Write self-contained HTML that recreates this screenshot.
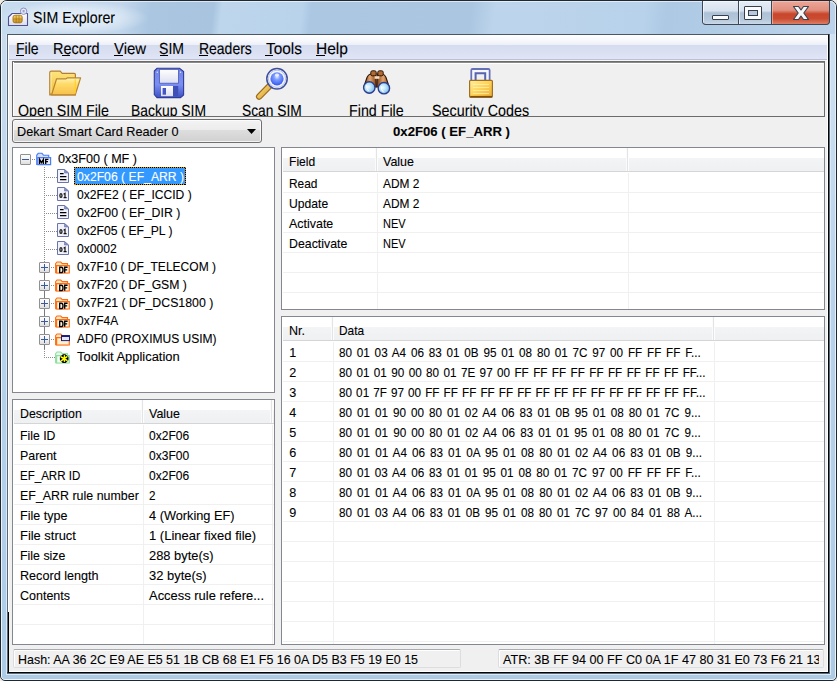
<!DOCTYPE html>
<html><head><meta charset="utf-8"><title>SIM Explorer</title>
<style>
*{box-sizing:border-box}
html,body{margin:0;padding:0;width:837px;height:681px;overflow:hidden;background:#f1ece2}
body{font-family:"Liberation Sans",sans-serif;position:relative;color:#000}
.a{position:absolute}
.t{position:absolute;white-space:pre;line-height:1;transform-origin:0 0;-webkit-text-stroke:0.1px currentColor}
</style></head><body>

<div class="a" style="left:0;top:0;width:837px;height:681px;border:1px solid #1d2833;border-radius:7px 7px 5px 5px;overflow:hidden;
 background:linear-gradient(100deg,#cddff0 0%,#bcd3ea 8%,#c4d9ee 14%,#b0cae4 22%,#bed4eb 30%,#abc7e2 38%,#b9d1e9 46%,#aac6e1 56%,#bad2ea 64%,#a9c5e1 72%,#bcd3eb 80%,#a8c5e2 90%,#c0d6ec 100%)"></div>
<div class="a" style="left:1px;top:1px;width:835px;height:679px;border:1px solid rgba(255,255,255,.7);border-radius:6px 6px 4px 4px"></div>
<div class="a" style="left:2px;top:34px;width:5px;height:639px;background:linear-gradient(#cadcee 0px,#b8d3eb 266px,#b0cde8 566px,#aecbe6 639px)"></div>
<div class="a" style="left:830px;top:34px;width:5px;height:639px;background:linear-gradient(#d0e2f2 0px,#b8d3eb 266px,#b0cde8 566px,#aecbe6 639px)"></div>
<div class="a" style="left:2px;top:673px;width:833px;height:6px;background:#aecbe6;border-radius:0 0 3px 3px"></div>
<div class="a" style="left:6px;top:33px;width:825px;height:642px;border:1px solid rgba(220,235,250,.95)"></div>
<div class="a" style="left:7px;top:34px;width:823px;height:640px;border:1px solid #5a6876;border-top-color:#4a5764"></div>
<div class="a" style="left:7px;top:34px;width:822px;height:639px;border:1px solid transparent;border-bottom-color:#050505;border-right-color:#050505;background:#f0f0f0;background-clip:padding-box"></div>
<div class="a" style="left:1px;top:1px;width:835px;height:33px;border-radius:6px 6px 0 0;background:linear-gradient(97deg,#c8dcef 0px,#c2d7ec 120px,#aac6e1 150px,#a8c4df 212px,#bdd6ec 220px,#b9d3eb 300px,#abc7e2 309px,#aac6e1 468px,#bdd5ec 492px,#b8d2eb 640px,#adc9e3 662px,#b0cbe5 700px,#bcd3ea 835px)"></div><div class="a" style="left:1px;top:1px;width:835px;height:33px;border:1px solid rgba(255,255,255,.6);border-bottom:none;border-radius:6px 6px 0 0"></div><div class="a" style="left:2px;top:2px;width:150px;height:31px;background:radial-gradient(ellipse 75px 17px at 72px 16px,rgba(240,246,252,.75) 0%,rgba(240,246,252,.55) 55%,rgba(240,246,252,0) 100%)"></div><svg class="a" style="left:7px;top:6px" width="22" height="22" viewBox="0 0 22 22">
 <defs><linearGradient id="tc" x1="0" y1="0" x2="0" y2="1"><stop offset="0" stop-color="#ffffff"/><stop offset="1" stop-color="#dcdde8"/></linearGradient>
 <linearGradient id="tg" x1="0" y1="0" x2="0" y2="1"><stop offset="0" stop-color="#f7d468"/><stop offset="1" stop-color="#c98e1c"/></linearGradient></defs>
 <path d="M1.5 11 L5.2 7.5 H20.5 V19.5 H1.5 Z" fill="url(#tc)" stroke="#4d5199" stroke-width="1.1" stroke-linejoin="round"/>
 <rect x="6" y="9.2" width="9.2" height="7.6" rx="2" fill="url(#tg)" stroke="#9a6a12" stroke-width=".8"/>
 <path d="M9.2 9.5 V16.5 M12 9.5 V16.5 M6.3 13 H15" stroke="#9a6a12" stroke-width=".6"/>
 <circle cx="16.6" cy="5.2" r="3.2" fill="#e6e9f5" stroke="#8a93c4" stroke-width="1"/>
 <rect x="15.6" y="4" width="2" height="2.4" fill="#9aa2cf"/>
</svg><div class="t" style="left:33.20px;top:11.00px;font-size:16px;color:#000;transform:scaleX(0.8868);text-rendering:geometricPrecision">SIM Explorer</div>
<div class="a" style="left:702px;top:1px;width:128px;height:24px;border:1px solid #3c4857;border-top:none;border-radius:0 0 4px 4px;overflow:hidden;background:#3c4857">
 <div class="a" style="left:0;top:0;width:35px;height:23px;background:linear-gradient(#e6edf5 0%,#d8e3ef 42%,#adc0d5 52%,#b5c7da 80%,#cad8e7 100%);box-shadow:inset 1px 1px 0 rgba(255,255,255,.6)"></div>
 <div class="a" style="left:36px;top:0;width:32px;height:23px;background:linear-gradient(#e6edf5 0%,#d8e3ef 42%,#adc0d5 52%,#b5c7da 80%,#cad8e7 100%);box-shadow:inset 1px 1px 0 rgba(255,255,255,.6)"></div>
 <div class="a" style="left:69px;top:0;width:58px;height:23px;background:linear-gradient(#eda798 0%,#e08f7e 40%,#c9472c 56%,#c94b30 76%,#df7d66 100%);box-shadow:inset 1px 1px 0 rgba(255,200,190,.6)"></div>
</div>
<div class="a" style="left:712px;top:15px;width:17px;height:5px;background:#fbfbfb;border:1px solid #353f4e;border-radius:1px"></div>
<div class="a" style="left:744px;top:6px;width:18px;height:14px;border:1px solid #353f4e;border-radius:1px;background:#fbfbfb"></div>
<div class="a" style="left:748px;top:10px;width:10px;height:6px;border:1px solid #353f4e;background:#b9c9db"></div>
<svg class="a" style="left:791px;top:5px" width="20" height="16" viewBox="0 0 20 16">
 <path d="M2.5 1.5 L7.5 1.5 L10 5 L12.5 1.5 L17.5 1.5 L12.8 8 L17.5 14.5 L12.5 14.5 L10 11 L7.5 14.5 L2.5 14.5 L7.2 8 Z" fill="#f6f6f6" stroke="#3a4150" stroke-width="1.1" stroke-linejoin="round"/>
</svg>
<div class="a" style="left:8px;top:35px;width:820px;height:25px;background:linear-gradient(#ffffff 0px,#f8f9fc 5px,#eceff8 10px,#d5dcef 10px,#dae0f2 17px,#e0e6f5 24px,#b9c0d7 24px)"></div>
<div class="a" style="left:8px;top:60px;width:820px;height:1px;background:#f7f7f7"></div><div class="t" style="left:16.10px;top:42.00px;font-size:16px;color:#000;transform:scaleX(0.8766);text-rendering:geometricPrecision">File</div><div class="a" style="left:16px;top:55px;width:8px;height:1px;background:#000"></div><div class="t" style="left:53.10px;top:42.00px;font-size:16px;color:#000;transform:scaleX(0.9015);text-rendering:geometricPrecision">Record</div><div class="a" style="left:62px;top:55px;width:8px;height:1px;background:#000"></div><div class="t" style="left:114.00px;top:42.00px;font-size:16px;color:#000;transform:scaleX(0.9334);text-rendering:geometricPrecision">View</div><div class="a" style="left:114px;top:55px;width:9px;height:1px;background:#000"></div><div class="t" style="left:159.40px;top:42.00px;font-size:16px;color:#000;transform:scaleX(0.8786);text-rendering:geometricPrecision">SIM</div><div class="a" style="left:160px;top:55px;width:8px;height:1px;background:#000"></div><div class="t" style="left:198.80px;top:42.00px;font-size:16px;color:#000;transform:scaleX(0.8730);text-rendering:geometricPrecision">Readers</div><div class="a" style="left:199px;top:55px;width:9px;height:1px;background:#000"></div><div class="t" style="left:265.90px;top:42.00px;font-size:16px;color:#000;transform:scaleX(0.9609);text-rendering:geometricPrecision">Tools</div><div class="a" style="left:265px;top:55px;width:8px;height:1px;background:#000"></div><div class="t" style="left:315.60px;top:42.00px;font-size:16px;color:#000;transform:scaleX(0.9694);text-rendering:geometricPrecision">Help</div><div class="a" style="left:316px;top:55px;width:9px;height:1px;background:#000"></div><div class="a" style="left:12px;top:61px;width:813px;height:56px;border:1px solid #6b6b6b;background:#f0f0f0"></div>
<div class="a" style="left:13px;top:62px;width:811px;height:1px;background:#8a8a8a"></div>
<div class="a" style="left:13px;top:63px;width:810px;height:1px;background:#fff"></div>
<div class="a" style="left:13px;top:62px;width:1px;height:54px;background:#fff"></div><div class="a" style="left:13px;top:63px;width:811px;height:53px;overflow:hidden"><div class="t" style="left:5.20px;top:41.00px;font-size:16px;color:#000;transform:scaleX(0.8889);text-rendering:geometricPrecision">Open SIM File</div><div class="t" style="left:117.70px;top:41.00px;font-size:16px;color:#000;transform:scaleX(0.8694);text-rendering:geometricPrecision">Backup SIM</div><div class="t" style="left:228.70px;top:41.00px;font-size:16px;color:#000;transform:scaleX(0.8622);text-rendering:geometricPrecision">Scan SIM</div><div class="t" style="left:335.90px;top:41.00px;font-size:16px;color:#000;transform:scaleX(0.8915);text-rendering:geometricPrecision">Find File</div><div class="t" style="left:418.90px;top:41.00px;font-size:16px;color:#000;transform:scaleX(0.8949);text-rendering:geometricPrecision">Security Codes</div></div><svg class="a" style="left:44px;top:64px;overflow:visible" width="44" height="36" viewBox="0 0 44 36">
<defs>
 <linearGradient id="fb" x1="0" y1="0" x2="0" y2="1"><stop offset="0" stop-color="#fde57e"/><stop offset="1" stop-color="#f0bd3c"/></linearGradient>
 <linearGradient id="ff" x1="0" y1="0" x2="0" y2="1"><stop offset="0" stop-color="#fff4b8"/><stop offset=".35" stop-color="#ffdb6a"/><stop offset="1" stop-color="#f7c04a"/></linearGradient>
</defs>
<path d="M5.8 30.8 V8.6 Q5.8 7.2 7.2 7.2 H16.2 L18.2 9.4 H30.2 Q31.4 9.4 31.4 10.6 V30.8 Z" fill="url(#fb)" stroke="#b47e30" stroke-width="1.2"/>
<path d="M7 8.6 V29" stroke="#fff7c0" stroke-width="1" opacity=".8"/>
<path d="M12.6 14.8 H22 L23.2 13.9 H36.6 L31.3 30.8 H7.6 Z" fill="url(#ff)" stroke="#b98630" stroke-width="1.2" stroke-linejoin="round"/>
<path d="M31.3 15.2 V29.5" stroke="#ffd21a" stroke-width="1.2" opacity=".85"/>
</svg><svg class="a" style="left:148px;top:64px;overflow:visible" width="44" height="36" viewBox="0 0 44 36">
<defs>
 <linearGradient id="flb" x1="0" y1="0" x2="0" y2="1"><stop offset="0" stop-color="#6f84e6"/><stop offset=".55" stop-color="#7b8ff2"/><stop offset="1" stop-color="#3c4fc6"/></linearGradient>
 <linearGradient id="flw" x1="0" y1="0" x2="0" y2="1"><stop offset="0" stop-color="#ffffff"/><stop offset="1" stop-color="#dcdff0"/></linearGradient>
</defs>
<path d="M9 4.3 H31.5 L35.6 7.5 V31 L32.5 33.6 H9 L6.3 30.5 V7 Z" fill="url(#flb)" stroke="#2e3c94" stroke-width="1.1"/>
<rect x="11.6" y="5.4" width="18.8" height="13.8" fill="url(#flw)" stroke="#4b5bb8" stroke-width=".8"/>
<rect x="13" y="22" width="17.2" height="10.2" fill="#3e4fb8"/>
<rect x="13" y="22" width="12" height="10.2" fill="url(#flw)"/>
<rect x="14.6" y="24" width="3.4" height="6.7" fill="#4455c4"/>
<circle cx="9.3" cy="8.2" r=".7" fill="#e0e6ff"/><circle cx="32.5" cy="8.2" r=".7" fill="#e0e6ff"/>
</svg><svg class="a" style="left:250px;top:64px;overflow:visible" width="44" height="36" viewBox="0 0 44 36">
<defs>
 <radialGradient id="mg" cx=".5" cy=".35" r=".65"><stop offset="0" stop-color="#dfe8ff"/><stop offset=".35" stop-color="#7d9cff"/><stop offset="1" stop-color="#3458f0"/></radialGradient>
 <linearGradient id="mh" x1="0" y1="0" x2="1" y2="1"><stop offset="0" stop-color="#ffe27a"/><stop offset="1" stop-color="#d49a32"/></linearGradient>
</defs>
<path d="M19 22.6 L9.2 32.6" stroke="#9c6a1c" stroke-width="6.4" stroke-linecap="round"/>
<path d="M19 22.6 L9.2 32.6" stroke="url(#mh)" stroke-width="4.2" stroke-linecap="round"/>
<circle cx="27" cy="14.8" r="10.2" fill="#f4f6fd" stroke="#3f4f9c" stroke-width="1.5"/>
<circle cx="27" cy="14.8" r="8.6" fill="none" stroke="#b7c0e4" stroke-width="1"/>
<circle cx="27" cy="14.8" r="6.6" fill="url(#mg)"/>
<ellipse cx="27" cy="11" rx="2.2" ry="1.6" fill="#fff" opacity=".75"/>
</svg><svg class="a" style="left:354px;top:64px;overflow:visible" width="44" height="36" viewBox="0 0 44 36">
<defs>
 <linearGradient id="bb" x1="0" y1="0" x2="1" y2="0"><stop offset="0" stop-color="#7c3c10"/><stop offset=".5" stop-color="#e2a470"/><stop offset="1" stop-color="#884614"/></linearGradient>
 <radialGradient id="bl" cx=".4" cy=".45" r=".7"><stop offset="0" stop-color="#f2fbff"/><stop offset=".45" stop-color="#b4e0f8"/><stop offset="1" stop-color="#6aa6e4"/></radialGradient>
</defs>
<path d="M9.8 23 L13 13.5 Q14.5 10 17.5 10 H21.8 L22.2 23 Z" fill="url(#bb)" stroke="#2e1606" stroke-width="1.1"/>
<path d="M22.8 23 L23.2 10 H27.5 Q30.5 10 32 13.5 L35.2 23 Z" fill="url(#bb)" stroke="#2e1606" stroke-width="1.1"/>
<rect x="16.8" y="6.8" width="5.4" height="5" rx="1.5" fill="#b06a34" stroke="#2e1606" stroke-width="1"/>
<rect x="23.8" y="6.8" width="5.4" height="5" rx="1.5" fill="#b06a34" stroke="#2e1606" stroke-width="1"/>
<rect x="20.6" y="12.2" width="4.8" height="2.6" fill="#f7dcc0"/>
<circle cx="15.3" cy="23.5" r="5.7" fill="url(#bl)" stroke="#2a3f8e" stroke-width="1.4"/>
<circle cx="29.9" cy="24.2" r="5.7" fill="url(#bl)" stroke="#2a3f8e" stroke-width="1.4"/>
<path d="M12.6 21.2 Q12.2 25 14.8 27.2" stroke="#fff" stroke-width="1" fill="none"/>
<path d="M27.2 22 Q26.8 25.8 29.4 28" stroke="#fff" stroke-width="1" fill="none"/>
</svg><svg class="a" style="left:459px;top:64px;overflow:visible" width="44" height="36" viewBox="0 0 44 36">
<defs>
 <linearGradient id="lk" x1="0" y1="0" x2="1" y2="1"><stop offset="0" stop-color="#fff0a0"/><stop offset=".5" stop-color="#ffd254"/><stop offset="1" stop-color="#e9ad35"/></linearGradient>
</defs>
<path d="M12.4 16.5 V6.2 Q12.4 5 13.6 5 H29.3 Q30.5 5 30.5 6.2 V16.5" fill="none" stroke="#6471b9" stroke-width="2"/>
<path d="M14.5 16.5 V7.1 H28.4 V16.5" fill="none" stroke="#f6f7fc" stroke-width="2.2"/>
<path d="M16.6 16.5 V9.2 H26.2 V16.5" fill="none" stroke="#5664b2" stroke-width="2"/>
<rect x="10.6" y="16.3" width="22.8" height="17" rx="1" fill="url(#lk)" stroke="#a06f24" stroke-width="1.2"/>
<path d="M14 20.5 H30 M14 23.5 H30 M14 26.5 H30 M14 29.5 H30" stroke="#fff6c8" stroke-width=".8" opacity=".8"/>
<path d="M11.2 32.6 H33" stroke="#7a4e14" stroke-width="1.4"/>
</svg><div class="a" style="left:12px;top:119px;width:250px;height:24px;border:1px solid #707070;border-radius:3px;background:linear-gradient(#f3f3f3 0%,#ececec 45%,#dedede 46%,#d0d0d0 100%);box-shadow:inset 0 0 0 1px rgba(255,255,255,.75)"></div>
<svg class="a" style="left:247px;top:129px" width="9" height="5"><path d="M0 0 H9 L4.5 5 Z" fill="#000"/></svg><div class="t" style="left:16.50px;top:126.00px;font-size:12.8px;color:#000;transform:scaleX(0.9916);">Dekart Smart Card Reader 0</div><div class="t" style="left:393.40px;top:125.00px;font-size:13px;font-weight:bold;color:#000;transform:scaleX(1.0122);">0x2F06 ( EF_ARR )</div><div class="a" style="left:12px;top:147px;width:263px;height:246px;border:1px solid #828790;background:#fff"></div><div class="a" style="left:20px;top:154px;width:11px;height:11px;border:1px solid #919191;border-radius:1px;background:linear-gradient(#fdfdfd 0%,#f2f2f2 50%,#dedede 100%)"></div><div class="a" style="left:22px;top:159px;width:7px;height:1px;background:#3c5a9a"></div><div class="a" style="left:32px;top:159px;width:4px;height:1px;background:repeating-linear-gradient(90deg,#8c8c8c 0 1px,transparent 1px 2px)"></div><div class="a" style="left:44px;top:167px;width:1px;height:191px;background:repeating-linear-gradient(#8c8c8c 0 1px,transparent 1px 2px)"></div><div class="a" style="left:44px;top:273px;width:1px;height:7px;background:#7a7a7a"></div><div class="a" style="left:44px;top:291px;width:1px;height:7px;background:#7a7a7a"></div><div class="a" style="left:44px;top:309px;width:1px;height:7px;background:#7a7a7a"></div><div class="a" style="left:44px;top:327px;width:1px;height:7px;background:#7a7a7a"></div><div class="a" style="left:44px;top:345px;width:1px;height:4px;background:#7a7a7a"></div><div class="a" style="left:46px;top:177px;width:11px;height:1px;background:repeating-linear-gradient(90deg,#8c8c8c 0 1px,transparent 1px 2px)"></div><div class="a" style="left:46px;top:195px;width:11px;height:1px;background:repeating-linear-gradient(90deg,#8c8c8c 0 1px,transparent 1px 2px)"></div><div class="a" style="left:46px;top:213px;width:11px;height:1px;background:repeating-linear-gradient(90deg,#8c8c8c 0 1px,transparent 1px 2px)"></div><div class="a" style="left:46px;top:231px;width:11px;height:1px;background:repeating-linear-gradient(90deg,#8c8c8c 0 1px,transparent 1px 2px)"></div><div class="a" style="left:46px;top:249px;width:11px;height:1px;background:repeating-linear-gradient(90deg,#8c8c8c 0 1px,transparent 1px 2px)"></div><div class="a" style="left:39px;top:262px;width:11px;height:11px;border:1px solid #919191;border-radius:1px;background:linear-gradient(#fdfdfd 0%,#f2f2f2 50%,#dedede 100%)"></div><div class="a" style="left:41px;top:267px;width:7px;height:1px;background:#3c5a9a"></div><div class="a" style="left:44px;top:264px;width:1px;height:7px;background:#3c5a9a"></div><div class="a" style="left:51px;top:267px;width:4px;height:1px;background:repeating-linear-gradient(90deg,#8c8c8c 0 1px,transparent 1px 2px)"></div><div class="a" style="left:39px;top:280px;width:11px;height:11px;border:1px solid #919191;border-radius:1px;background:linear-gradient(#fdfdfd 0%,#f2f2f2 50%,#dedede 100%)"></div><div class="a" style="left:41px;top:285px;width:7px;height:1px;background:#3c5a9a"></div><div class="a" style="left:44px;top:282px;width:1px;height:7px;background:#3c5a9a"></div><div class="a" style="left:51px;top:285px;width:4px;height:1px;background:repeating-linear-gradient(90deg,#8c8c8c 0 1px,transparent 1px 2px)"></div><div class="a" style="left:39px;top:298px;width:11px;height:11px;border:1px solid #919191;border-radius:1px;background:linear-gradient(#fdfdfd 0%,#f2f2f2 50%,#dedede 100%)"></div><div class="a" style="left:41px;top:303px;width:7px;height:1px;background:#3c5a9a"></div><div class="a" style="left:44px;top:300px;width:1px;height:7px;background:#3c5a9a"></div><div class="a" style="left:51px;top:303px;width:4px;height:1px;background:repeating-linear-gradient(90deg,#8c8c8c 0 1px,transparent 1px 2px)"></div><div class="a" style="left:39px;top:316px;width:11px;height:11px;border:1px solid #919191;border-radius:1px;background:linear-gradient(#fdfdfd 0%,#f2f2f2 50%,#dedede 100%)"></div><div class="a" style="left:41px;top:321px;width:7px;height:1px;background:#3c5a9a"></div><div class="a" style="left:44px;top:318px;width:1px;height:7px;background:#3c5a9a"></div><div class="a" style="left:51px;top:321px;width:4px;height:1px;background:repeating-linear-gradient(90deg,#8c8c8c 0 1px,transparent 1px 2px)"></div><div class="a" style="left:39px;top:334px;width:11px;height:11px;border:1px solid #919191;border-radius:1px;background:linear-gradient(#fdfdfd 0%,#f2f2f2 50%,#dedede 100%)"></div><div class="a" style="left:41px;top:339px;width:7px;height:1px;background:#3c5a9a"></div><div class="a" style="left:44px;top:336px;width:1px;height:7px;background:#3c5a9a"></div><div class="a" style="left:51px;top:339px;width:4px;height:1px;background:repeating-linear-gradient(90deg,#8c8c8c 0 1px,transparent 1px 2px)"></div><div class="a" style="left:46px;top:357px;width:11px;height:1px;background:repeating-linear-gradient(90deg,#8c8c8c 0 1px,transparent 1px 2px)"></div><div class="a" style="left:74px;top:167px;width:112px;height:18px;background:#3399ff"></div><div class="a" style="left:74px;top:167px;width:112px;height:1px;background:repeating-linear-gradient(90deg,#000 0 1px,#f08a00 1px 2px)"></div><div class="a" style="left:74px;top:184px;width:112px;height:1px;background:repeating-linear-gradient(90deg,#000 0 1px,#f08a00 1px 2px)"></div><div class="a" style="left:74px;top:167px;width:1px;height:18px;background:repeating-linear-gradient(#000 0 1px,#f08a00 1px 2px)"></div><div class="a" style="left:185px;top:167px;width:1px;height:18px;background:repeating-linear-gradient(#f08a00 0 1px,#000 1px 2px)"></div><div class="t" style="left:57.50px;top:153.00px;font-size:12.3px;color:#000;transform:scaleX(1.0231);">0x3F00 ( MF )</div><div class="t" style="left:76.50px;top:171.00px;font-size:12.3px;color:#fff;transform:scaleX(0.9918);">0x2F06 ( EF_ARR )</div><div class="t" style="left:76.50px;top:189.00px;font-size:12.3px;color:#000;transform:scaleX(0.9815);">0x2FE2 ( EF_ICCID )</div><div class="t" style="left:76.50px;top:207.00px;font-size:12.3px;color:#000;transform:scaleX(1.0011);">0x2F00 ( EF_DIR )</div><div class="t" style="left:76.50px;top:225.00px;font-size:12.3px;color:#000;transform:scaleX(0.9897);">0x2F05 ( EF_PL )</div><div class="t" style="left:76.50px;top:243.00px;font-size:12.3px;color:#000;transform:scaleX(0.9865);">0x0002</div><div class="t" style="left:76.50px;top:261.00px;font-size:12.3px;color:#000;transform:scaleX(0.9779);">0x7F10 ( DF_TELECOM )</div><div class="t" style="left:76.50px;top:279.00px;font-size:12.3px;color:#000;transform:scaleX(0.9927);">0x7F20 ( DF_GSM )</div><div class="t" style="left:76.50px;top:297.00px;font-size:12.3px;color:#000;transform:scaleX(1.0021);">0x7F21 ( DF_DCS1800 )</div><div class="t" style="left:76.50px;top:315.00px;font-size:12.3px;color:#000;transform:scaleX(0.9696);">0x7F4A</div><div class="t" style="left:76.50px;top:333.00px;font-size:12.3px;color:#000;transform:scaleX(0.9776);">ADF0 (PROXIMUS USIM)</div><div class="t" style="left:76.50px;top:351.00px;font-size:12.3px;color:#000;transform:scaleX(1.0505);">Toolkit Application</div><svg class="a" style="left:36px;top:152px;overflow:visible" width="16" height="14" viewBox="0 0 16 14"><path d="M0.7 12.4 V3.3 L2.2 1.3 H6 L7.6 3.3 H12.7 V12.4 Z" fill="#d5defc" stroke="#4b7df5" stroke-width="1.1"/>
<path d="M1.8 12.6 V5.6 H14.6 V12.6 Z" fill="#e8edfd" stroke="#4b7df5" stroke-width="1.2"/>
<path d="M3.6 12 V7.4 L5.5 10.6 L7.4 7.4 V12 M9.7 12 V7.4 H12.4 M9.7 9.6 H12" fill="none" stroke="#000" stroke-width="1.35" stroke-linejoin="miter"/></svg><svg class="a" style="left:57px;top:169px;overflow:visible" width="12" height="14" viewBox="0 0 12 14"><path d="M0.5 0.5 H7.5 L11.5 4 V13.5 H0.5 Z" fill="#f1f2fb" stroke="#6a74aa" stroke-width="1"/>
<path d="M7.5 0.5 V4 H11.5 Z" fill="#8a92c4" stroke="#6a74aa" stroke-width=".6"/><path d="M3 4.6 H6.6 M3 7.6 H9.4 M3 10.6 H9.4" stroke="#000" stroke-width="1.3"/></svg><svg class="a" style="left:57px;top:187px;overflow:visible" width="12" height="14" viewBox="0 0 12 14"><path d="M0.5 0.5 H7.5 L11.5 4 V13.5 H0.5 Z" fill="#f1f2fb" stroke="#6a74aa" stroke-width="1"/>
<path d="M7.5 0.5 V4 H11.5 Z" fill="#8a92c4" stroke="#6a74aa" stroke-width=".6"/><ellipse cx="3.95" cy="8.45" rx="1.05" ry="1.95" fill="none" stroke="#111" stroke-width="1.25"/><path d="M6.6 7.2 L8 6.4 V10.6 M6.6 10.6 H9.6" fill="none" stroke="#111" stroke-width="1.2"/></svg><svg class="a" style="left:57px;top:205px;overflow:visible" width="12" height="14" viewBox="0 0 12 14"><path d="M0.5 0.5 H7.5 L11.5 4 V13.5 H0.5 Z" fill="#f1f2fb" stroke="#6a74aa" stroke-width="1"/>
<path d="M7.5 0.5 V4 H11.5 Z" fill="#8a92c4" stroke="#6a74aa" stroke-width=".6"/><path d="M3 4.6 H6.6 M3 7.6 H9.4 M3 10.6 H9.4" stroke="#000" stroke-width="1.3"/></svg><svg class="a" style="left:57px;top:223px;overflow:visible" width="12" height="14" viewBox="0 0 12 14"><path d="M0.5 0.5 H7.5 L11.5 4 V13.5 H0.5 Z" fill="#f1f2fb" stroke="#6a74aa" stroke-width="1"/>
<path d="M7.5 0.5 V4 H11.5 Z" fill="#8a92c4" stroke="#6a74aa" stroke-width=".6"/><ellipse cx="3.95" cy="8.45" rx="1.05" ry="1.95" fill="none" stroke="#111" stroke-width="1.25"/><path d="M6.6 7.2 L8 6.4 V10.6 M6.6 10.6 H9.6" fill="none" stroke="#111" stroke-width="1.2"/></svg><svg class="a" style="left:57px;top:241px;overflow:visible" width="12" height="14" viewBox="0 0 12 14"><path d="M0.5 0.5 H7.5 L11.5 4 V13.5 H0.5 Z" fill="#f1f2fb" stroke="#6a74aa" stroke-width="1"/>
<path d="M7.5 0.5 V4 H11.5 Z" fill="#8a92c4" stroke="#6a74aa" stroke-width=".6"/><ellipse cx="3.95" cy="8.45" rx="1.05" ry="1.95" fill="none" stroke="#111" stroke-width="1.25"/><path d="M6.6 7.2 L8 6.4 V10.6 M6.6 10.6 H9.6" fill="none" stroke="#111" stroke-width="1.2"/></svg><svg class="a" style="left:55px;top:261px;overflow:visible" width="15" height="13" viewBox="0 0 15 13"><path d="M0.6 11.6 V2.6 L2 1 H5.8 L7.3 2.6 H12.5 V11.6 Z" fill="#ffe7c0" stroke="#ff6d12" stroke-width="1.1"/>
<path d="M1.6 12 V4.6 H14.3 V12 Z" fill="#fff3dd" stroke="#ff6d12" stroke-width="1.2"/>
<path d="M4.7 6.2 V11.6 H6.2 Q8 11.6 8 8.9 Q8 6.2 6.2 6.2 Z M9.7 11.8 V6.2 H12.6 M9.7 8.8 H12.2" fill="none" stroke="#000" stroke-width="1.35"/></svg><svg class="a" style="left:55px;top:279px;overflow:visible" width="15" height="13" viewBox="0 0 15 13"><path d="M0.6 11.6 V2.6 L2 1 H5.8 L7.3 2.6 H12.5 V11.6 Z" fill="#ffe7c0" stroke="#ff6d12" stroke-width="1.1"/>
<path d="M1.6 12 V4.6 H14.3 V12 Z" fill="#fff3dd" stroke="#ff6d12" stroke-width="1.2"/>
<path d="M4.7 6.2 V11.6 H6.2 Q8 11.6 8 8.9 Q8 6.2 6.2 6.2 Z M9.7 11.8 V6.2 H12.6 M9.7 8.8 H12.2" fill="none" stroke="#000" stroke-width="1.35"/></svg><svg class="a" style="left:55px;top:297px;overflow:visible" width="15" height="13" viewBox="0 0 15 13"><path d="M0.6 11.6 V2.6 L2 1 H5.8 L7.3 2.6 H12.5 V11.6 Z" fill="#ffe7c0" stroke="#ff6d12" stroke-width="1.1"/>
<path d="M1.6 12 V4.6 H14.3 V12 Z" fill="#fff3dd" stroke="#ff6d12" stroke-width="1.2"/>
<path d="M4.7 6.2 V11.6 H6.2 Q8 11.6 8 8.9 Q8 6.2 6.2 6.2 Z M9.7 11.8 V6.2 H12.6 M9.7 8.8 H12.2" fill="none" stroke="#000" stroke-width="1.35"/></svg><svg class="a" style="left:55px;top:315px;overflow:visible" width="15" height="13" viewBox="0 0 15 13"><path d="M0.6 11.6 V2.6 L2 1 H5.8 L7.3 2.6 H12.5 V11.6 Z" fill="#ffe7c0" stroke="#ff6d12" stroke-width="1.1"/>
<path d="M1.6 12 V4.6 H14.3 V12 Z" fill="#fff3dd" stroke="#ff6d12" stroke-width="1.2"/>
<path d="M4.7 6.2 V11.6 H6.2 Q8 11.6 8 8.9 Q8 6.2 6.2 6.2 Z M9.7 11.8 V6.2 H12.6 M9.7 8.8 H12.2" fill="none" stroke="#000" stroke-width="1.35"/></svg><svg class="a" style="left:55px;top:333px;overflow:visible" width="15" height="13" viewBox="0 0 15 13"><path d="M0.6 11.6 V2.6 L2 1 H5.8 L7.3 2.6 H12.5 V11.6 Z" fill="#ffe7c0" stroke="#ff6d12" stroke-width="1.1"/>
<path d="M1.6 12 V4.6 H14.3 V12 Z" fill="#ffefcc" stroke="#ff6d12" stroke-width="1.2"/>
<rect x="6.5" y="2.6" width="8" height="5" fill="#e6e6fa" stroke="#1b1f7a" stroke-width="1"/>
<rect x="6.5" y="2.4" width="8" height="1.6" fill="#1b1f7a"/></svg><svg class="a" style="left:55px;top:351px;overflow:visible" width="16" height="14" viewBox="0 0 16 14"><path d="M0.6 11.6 V2.6 L2 1 H5.8 L7.3 2.6 H12.5 V11.6 Z" fill="#e6fae9" stroke="#8fe0a0" stroke-width="1.1"/>
<path d="M1.6 12 V4.6 H14.3 V12 Z" fill="#f2fdf3" stroke="#8fe0a0" stroke-width="1.2"/>
<g transform="translate(9.2,7.6)"><path d="M-1.2 -4.3 H1.2 L4.3 -1.5 V1.5 L1.5 4.3 H-1.5 L-4.3 1.5 V-1.5 Z" fill="#000"/>
<path d="M-3 -1.6 L2.8 1.8 M-2.8 2 L2.6 -1.8 M0.2 -2.8 V2.6" stroke="#ffff00" stroke-width="1.5" stroke-linecap="round"/></g></svg><div class="a" style="left:12px;top:399px;width:263px;height:246px;border:1px solid #828790;background:#fff;overflow:hidden"><div class="a" style="left:1px;top:0;width:260px;height:24px;background:linear-gradient(#ffffff 0px,#ffffff 10px,#f3f4f6 10px,#eff0f2 23px,#d5d5d5 23px)"></div><div class="a" style="left:128px;top:0;width:1px;height:23px;background:#fbfbfc"></div><div class="a" style="left:129px;top:0;width:1px;height:23px;background:#e3e4e6"></div><div class="a" style="left:130px;top:0;width:1px;height:23px;background:#fdfdfd"></div><div class="a" style="left:257px;top:0;width:1px;height:23px;background:#fbfbfc"></div><div class="a" style="left:258px;top:0;width:1px;height:23px;background:#e3e4e6"></div><div class="a" style="left:259px;top:0;width:1px;height:23px;background:#fdfdfd"></div><div class="a" style="left:1px;top:44px;width:260px;height:1px;background:#f0f0f0"></div><div class="a" style="left:1px;top:64px;width:260px;height:1px;background:#f0f0f0"></div><div class="a" style="left:1px;top:84px;width:260px;height:1px;background:#f0f0f0"></div><div class="a" style="left:1px;top:104px;width:260px;height:1px;background:#f0f0f0"></div><div class="a" style="left:1px;top:124px;width:260px;height:1px;background:#f0f0f0"></div><div class="a" style="left:1px;top:144px;width:260px;height:1px;background:#f0f0f0"></div><div class="a" style="left:1px;top:164px;width:260px;height:1px;background:#f0f0f0"></div><div class="a" style="left:1px;top:184px;width:260px;height:1px;background:#f0f0f0"></div><div class="a" style="left:1px;top:204px;width:260px;height:1px;background:#f0f0f0"></div><div class="a" style="left:1px;top:224px;width:260px;height:1px;background:#f0f0f0"></div><div class="a" style="left:130px;top:25px;width:1px;height:246px;background:#f0f0f0"></div><div class="a" style="left:259px;top:25px;width:1px;height:246px;background:#f0f0f0"></div></div><div class="t" style="left:20.30px;top:408.00px;font-size:12.6px;color:#000;transform:scaleX(0.9810);">Description</div><div class="t" style="left:149.40px;top:408.00px;font-size:12.6px;color:#000;transform:scaleX(0.9910);">Value</div><div class="t" style="left:20.30px;top:430.00px;font-size:12.6px;color:#000;transform:scaleX(0.9728);">File ID</div><div class="t" style="left:149.40px;top:430.00px;font-size:12.6px;color:#000;transform:scaleX(0.9544);">0x2F06</div><div class="t" style="left:20.30px;top:450.00px;font-size:12.6px;color:#000;transform:scaleX(0.9836);">Parent</div><div class="t" style="left:149.40px;top:450.00px;font-size:12.6px;color:#000;transform:scaleX(0.9544);">0x3F00</div><div class="t" style="left:20.30px;top:470.00px;font-size:12.6px;color:#000;transform:scaleX(0.9167);">EF_ARR ID</div><div class="t" style="left:149.40px;top:470.00px;font-size:12.6px;color:#000;transform:scaleX(0.9544);">0x2F06</div><div class="t" style="left:20.30px;top:490.00px;font-size:12.6px;color:#000;transform:scaleX(0.9868);">EF_ARR rule number</div><div class="t" style="left:149.40px;top:490.00px;font-size:12.6px;color:#000;transform:scaleX(0.9265);">2</div><div class="t" style="left:20.30px;top:510.00px;font-size:12.6px;color:#000;transform:scaleX(0.9956);">File type</div><div class="t" style="left:149.40px;top:510.00px;font-size:12.6px;color:#000;transform:scaleX(1.0124);">4 (Working EF)</div><div class="t" style="left:20.30px;top:530.00px;font-size:12.6px;color:#000;transform:scaleX(1.0239);">File struct</div><div class="t" style="left:149.40px;top:530.00px;font-size:12.6px;color:#000;transform:scaleX(1.0347);">1 (Linear fixed file)</div><div class="t" style="left:20.30px;top:550.00px;font-size:12.6px;color:#000;transform:scaleX(0.9829);">File size</div><div class="t" style="left:149.40px;top:550.00px;font-size:12.6px;color:#000;transform:scaleX(1.0238);">288 byte(s)</div><div class="t" style="left:20.30px;top:570.00px;font-size:12.6px;color:#000;transform:scaleX(1.0010);">Record length</div><div class="t" style="left:149.40px;top:570.00px;font-size:12.6px;color:#000;transform:scaleX(1.0268);">32 byte(s)</div><div class="t" style="left:20.30px;top:590.00px;font-size:12.6px;color:#000;transform:scaleX(0.9919);">Contents</div><div class="t" style="left:149.40px;top:590.00px;font-size:12.6px;color:#000;transform:scaleX(1.0268);">Access rule refere...</div><div class="a" style="left:281px;top:147px;width:544px;height:163px;border:1px solid #828790;background:#fff;overflow:hidden"><div class="a" style="left:1px;top:0;width:541px;height:24px;background:linear-gradient(#ffffff 0px,#ffffff 10px,#f3f4f6 10px,#eff0f2 23px,#d5d5d5 23px)"></div><div class="a" style="left:93px;top:0;width:1px;height:23px;background:#fbfbfc"></div><div class="a" style="left:94px;top:0;width:1px;height:23px;background:#e3e4e6"></div><div class="a" style="left:95px;top:0;width:1px;height:23px;background:#fdfdfd"></div><div class="a" style="left:344px;top:0;width:1px;height:23px;background:#fbfbfc"></div><div class="a" style="left:345px;top:0;width:1px;height:23px;background:#e3e4e6"></div><div class="a" style="left:346px;top:0;width:1px;height:23px;background:#fdfdfd"></div><div class="a" style="left:1px;top:44px;width:541px;height:1px;background:#f0f0f0"></div><div class="a" style="left:1px;top:64px;width:541px;height:1px;background:#f0f0f0"></div><div class="a" style="left:1px;top:84px;width:541px;height:1px;background:#f0f0f0"></div><div class="a" style="left:1px;top:104px;width:541px;height:1px;background:#f0f0f0"></div><div class="a" style="left:1px;top:124px;width:541px;height:1px;background:#f0f0f0"></div><div class="a" style="left:1px;top:144px;width:541px;height:1px;background:#f0f0f0"></div><div class="a" style="left:95px;top:25px;width:1px;height:163px;background:#f0f0f0"></div><div class="a" style="left:346px;top:25px;width:1px;height:163px;background:#f0f0f0"></div></div><div class="t" style="left:289.30px;top:156.00px;font-size:12.6px;color:#000;transform:scaleX(0.9598);">Field</div><div class="t" style="left:383.30px;top:156.00px;font-size:12.6px;color:#000;transform:scaleX(0.9910);">Value</div><div class="t" style="left:289.30px;top:178.00px;font-size:12.6px;color:#000;transform:scaleX(0.9465);">Read</div><div class="t" style="left:383.30px;top:178.00px;font-size:12.6px;color:#000;transform:scaleX(0.9455);">ADM 2</div><div class="t" style="left:289.30px;top:198.00px;font-size:12.6px;color:#000;transform:scaleX(0.9649);">Update</div><div class="t" style="left:383.30px;top:198.00px;font-size:12.6px;color:#000;transform:scaleX(0.9455);">ADM 2</div><div class="t" style="left:289.30px;top:218.00px;font-size:12.6px;color:#000;transform:scaleX(0.9886);">Activate</div><div class="t" style="left:383.30px;top:218.00px;font-size:12.6px;color:#000;transform:scaleX(0.8724);">NEV</div><div class="t" style="left:289.30px;top:238.00px;font-size:12.6px;color:#000;transform:scaleX(0.9796);">Deactivate</div><div class="t" style="left:383.30px;top:238.00px;font-size:12.6px;color:#000;transform:scaleX(0.8724);">NEV</div><div class="a" style="left:281px;top:316px;width:544px;height:329px;border:1px solid #828790;background:#fff;overflow:hidden"><div class="a" style="left:1px;top:0;width:541px;height:24px;background:linear-gradient(#ffffff 0px,#ffffff 10px,#f3f4f6 10px,#eff0f2 23px,#d5d5d5 23px)"></div><div class="a" style="left:49px;top:0;width:1px;height:23px;background:#fbfbfc"></div><div class="a" style="left:50px;top:0;width:1px;height:23px;background:#e3e4e6"></div><div class="a" style="left:51px;top:0;width:1px;height:23px;background:#fdfdfd"></div><div class="a" style="left:430px;top:0;width:1px;height:23px;background:#fbfbfc"></div><div class="a" style="left:431px;top:0;width:1px;height:23px;background:#e3e4e6"></div><div class="a" style="left:432px;top:0;width:1px;height:23px;background:#fdfdfd"></div><div class="a" style="left:1px;top:44px;width:541px;height:1px;background:#f0f0f0"></div><div class="a" style="left:1px;top:64px;width:541px;height:1px;background:#f0f0f0"></div><div class="a" style="left:1px;top:84px;width:541px;height:1px;background:#f0f0f0"></div><div class="a" style="left:1px;top:104px;width:541px;height:1px;background:#f0f0f0"></div><div class="a" style="left:1px;top:124px;width:541px;height:1px;background:#f0f0f0"></div><div class="a" style="left:1px;top:144px;width:541px;height:1px;background:#f0f0f0"></div><div class="a" style="left:1px;top:164px;width:541px;height:1px;background:#f0f0f0"></div><div class="a" style="left:1px;top:184px;width:541px;height:1px;background:#f0f0f0"></div><div class="a" style="left:1px;top:204px;width:541px;height:1px;background:#f0f0f0"></div><div class="a" style="left:1px;top:224px;width:541px;height:1px;background:#f0f0f0"></div><div class="a" style="left:1px;top:244px;width:541px;height:1px;background:#f0f0f0"></div><div class="a" style="left:1px;top:264px;width:541px;height:1px;background:#f0f0f0"></div><div class="a" style="left:1px;top:284px;width:541px;height:1px;background:#f0f0f0"></div><div class="a" style="left:1px;top:304px;width:541px;height:1px;background:#f0f0f0"></div><div class="a" style="left:1px;top:324px;width:541px;height:1px;background:#f0f0f0"></div><div class="a" style="left:51px;top:25px;width:1px;height:329px;background:#f0f0f0"></div><div class="a" style="left:432px;top:25px;width:1px;height:329px;background:#f0f0f0"></div></div><div class="t" style="left:289.20px;top:325.00px;font-size:12.6px;color:#000;transform:scaleX(0.9942);">Nr.</div><div class="t" style="left:339.30px;top:325.00px;font-size:12.6px;color:#000;transform:scaleX(0.9433);">Data</div><div class="t" style="left:289.20px;top:347.00px;font-size:12.6px;color:#000;">1</div><div class="t" style="left:339.30px;top:347.00px;font-size:12.6px;color:#000;transform:scaleX(0.9300);word-spacing:1.646px;">80 01 03 A4 06 83 01 0B 95 01 08 80 01 7C 97 00 FF FF FF F...</div><div class="t" style="left:289.20px;top:367.00px;font-size:12.6px;color:#000;">2</div><div class="t" style="left:339.30px;top:367.00px;font-size:12.6px;color:#000;transform:scaleX(0.9300);word-spacing:1.219px;">80 01 01 90 00 80 01 7E 97 00 FF FF FF FF FF FF FF FF FF FF...</div><div class="t" style="left:289.20px;top:387.00px;font-size:12.6px;color:#000;">3</div><div class="t" style="left:339.30px;top:387.00px;font-size:12.6px;color:#000;transform:scaleX(0.9300);word-spacing:0.894px;">80 01 7F 97 00 FF FF FF FF FF FF FF FF FF FF FF FF FF FF FF...</div><div class="t" style="left:289.20px;top:407.00px;font-size:12.6px;color:#000;">4</div><div class="t" style="left:339.30px;top:407.00px;font-size:12.6px;color:#000;transform:scaleX(0.9300);word-spacing:1.827px;">80 01 01 90 00 80 01 02 A4 06 83 01 0B 95 01 08 80 01 7C 9...</div><div class="t" style="left:289.20px;top:427.00px;font-size:12.6px;color:#000;">5</div><div class="t" style="left:339.30px;top:427.00px;font-size:12.6px;color:#000;transform:scaleX(0.9300);word-spacing:1.900px;">80 01 01 90 00 80 01 02 A4 06 83 01 01 95 01 08 80 01 7C 9...</div><div class="t" style="left:289.20px;top:447.00px;font-size:12.6px;color:#000;">6</div><div class="t" style="left:339.30px;top:447.00px;font-size:12.6px;color:#000;transform:scaleX(0.9300);word-spacing:1.931px;">80 01 01 A4 06 83 01 0A 95 01 08 80 01 02 A4 06 83 01 0B 9...</div><div class="t" style="left:289.20px;top:467.00px;font-size:12.6px;color:#000;">7</div><div class="t" style="left:339.30px;top:467.00px;font-size:12.6px;color:#000;transform:scaleX(0.9300);word-spacing:1.720px;">80 01 03 A4 06 83 01 01 95 01 08 80 01 7C 97 00 FF FF FF F...</div><div class="t" style="left:289.20px;top:487.00px;font-size:12.6px;color:#000;">8</div><div class="t" style="left:339.30px;top:487.00px;font-size:12.6px;color:#000;transform:scaleX(0.9300);word-spacing:1.931px;">80 01 01 A4 06 83 01 0A 95 01 08 80 01 02 A4 06 83 01 0B 9...</div><div class="t" style="left:289.20px;top:507.00px;font-size:12.6px;color:#000;">9</div><div class="t" style="left:339.30px;top:507.00px;font-size:12.6px;color:#000;transform:scaleX(0.9300);word-spacing:1.857px;">80 01 03 A4 06 83 01 0B 95 01 08 80 01 7C 97 00 84 01 88 A...</div><div class="a" style="left:8px;top:671px;width:820px;height:1px;background:#fff"></div>
<div class="a" style="left:13px;top:649px;width:448px;height:19px;border:1px solid #dcdde0;border-top-color:#a9abae;border-radius:2px;box-shadow:inset 1px 1px 0 #fff"></div>
<div class="a" style="left:498px;top:649px;width:326px;height:19px;border:1px solid #dcdde0;border-top-color:#a9abae;border-radius:2px;box-shadow:inset 1px 1px 0 #fff"></div>
<div class="a" style="left:8px;top:35px;width:1px;height:637px;background:#fff"></div>
<div class="a" style="left:827px;top:35px;width:1px;height:637px;background:#fff"></div>
<div class="a" style="left:8px;top:612px;width:1px;height:60px;background:#000"></div><div class="a" style="left:499px;top:650px;width:320px;height:17px;overflow:hidden"><div class="t" style="left:4.00px;top:4.00px;font-size:12.6px;color:#000;">ATR: 3B FF 94 00 FF C0 0A 1F 47 80 31 E0 73 F6 21 13</div></div><div class="t" style="left:18.00px;top:654.00px;font-size:12.6px;color:#000;transform:scaleX(0.9885);">Hash: AA 36 2C E9 AE E5 51 1B CB 68 E1 F5 16 0A D5 B3 F5 19 E0 15</div>
</body></html>
